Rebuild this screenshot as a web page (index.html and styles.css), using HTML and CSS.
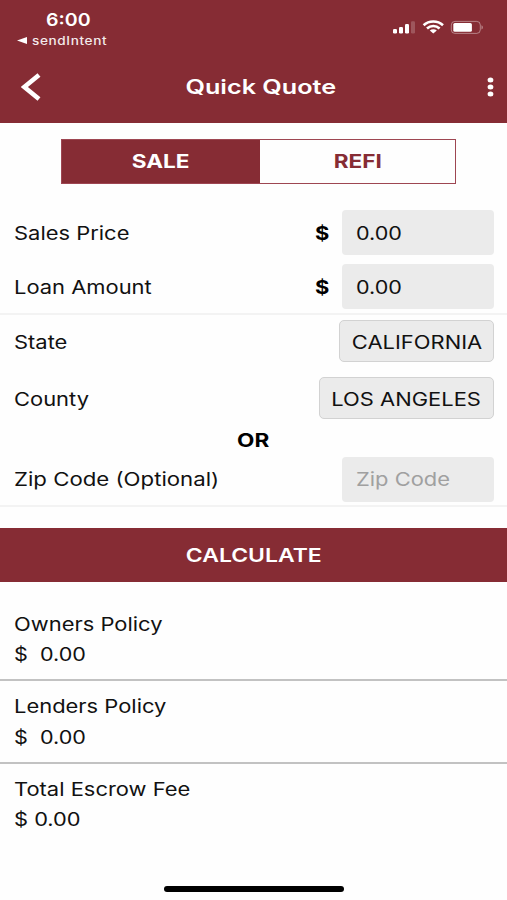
FILE: index.html
```html
<!DOCTYPE html>
<html lang="en">
<head>
    <meta charset="UTF-8">
    <meta name="viewport" content="width=device-width, initial-scale=1.0">
    <title>Quick Quote</title>
    <link rel="stylesheet" href="styles.css">
</head>
<body>
    <div class="screen">
        <header class="header">
            <div class="status-bar">
                <div class="status-left">
                    <span class="time wide">6:00</span>
                    <div class="back-app">
                        <svg class="back-arrow" width="10" height="7" viewBox="0 0 9 7" preserveAspectRatio="none"><path d="M0 3.5L9 0v7z" fill="#fff"/></svg>
                        <span class="app-name wide">sendIntent</span>
                    </div>
                </div>
                <svg class="status-icons" width="92" height="16" viewBox="0 0 92 16">
                    <g fill="#fff">
                        <rect x="0" y="9" width="4" height="4.5" rx="1.2"/>
                        <rect x="6" y="7" width="4" height="6.5" rx="1.2"/>
                        <rect x="12" y="4" width="4" height="9.5" rx="1.2"/>
                        <rect x="18" y="1.3" width="4" height="12.2" rx="1.2" opacity="0.2"/>
                        <rect x="60.3" y="3" width="18.6" height="8.8" rx="1.6"/>
                        <path d="M88.5 5.2c1.8.7 1.8 3.6 0 4.3z" opacity="0.45"/>
                    </g>
                    <g fill="none" stroke="#fff" stroke-width="2.6">
                        <path d="M30.6 5.2C36 .2 44.6 .2 50 5.2"/>
                        <path d="M34 8.5c3.6-3.4 9-3.4 12.6 0"/>
                    </g>
                    <path d="M36.8 10.6c2-1.7 5-1.7 7 0L40.3 13.6z" fill="#fff"/>
                    <rect x="58.3" y="1.4" width="29" height="12" rx="3.6" fill="none" stroke="#fff" opacity="0.4"/>
                </svg>
            </div>
            <div class="nav-bar">
                <svg class="back" width="20" height="28" viewBox="0 0 20 28"><path d="M18 2L3.3 14 18 26" fill="none" stroke="#fff" stroke-width="4.6"/></svg>
                <h1 class="title wide">Quick Quote</h1>
                <svg class="more" width="7" height="20" viewBox="0 0 7 20" fill="#fff">
                    <ellipse cx="3.5" cy="3" rx="2.9" ry="2.5"/>
                    <ellipse cx="3.5" cy="10" rx="2.9" ry="2.5"/>
                    <ellipse cx="3.5" cy="17" rx="2.9" ry="2.5"/>
                </svg>
            </div>
        </header>

        <div class="segment">
            <div class="tab active"><span class="wide">SALE</span></div>
            <div class="tab"><span class="wide">REFI</span></div>
        </div>

        <div class="prices">
            <div class="row">
                <span class="label wide">Sales Price</span>
                <span class="dollar wide">$</span>
                <div class="field"><span class="wide amount">0.00</span></div>
            </div>
            <div class="row">
                <span class="label wide">Loan Amount</span>
                <span class="dollar wide">$</span>
                <div class="field"><span class="wide amount">0.00</span></div>
            </div>
        </div>

        <div class="location">
            <div class="row state-row">
                <span class="label wide">State</span>
                <div class="picker state"><span class="wide">CALIFORNIA</span></div>
            </div>
            <div class="row county-row">
                <span class="label wide">County</span>
                <div class="picker county"><span class="wide">LOS ANGELES</span></div>
            </div>
            <div class="or"><span class="wide">OR</span></div>
            <div class="row zip-row">
                <span class="label wide">Zip Code (Optional)</span>
                <div class="field"><span class="wide placeholder">Zip Code</span></div>
            </div>
        </div>

        <div class="calculate"><span class="wide">CALCULATE</span></div>

        <div class="results">
            <div class="result">
                <span class="wide">Owners Policy</span>
                <span class="wide amount">$&nbsp; 0.00</span>
            </div>
            <div class="result">
                <span class="wide">Lenders Policy</span>
                <span class="wide amount">$&nbsp; 0.00</span>
            </div>
            <div class="result">
                <span class="wide">Total Escrow Fee</span>
                <span class="wide amount total">$ 0.00</span>
            </div>
        </div>

        <div class="home-indicator"></div>
    </div>
</body>
</html>
```
FILE: styles.css
```css
body {
    margin: 0;
    font-family: Inter, "Liberation Sans", sans-serif;
    font-size: 18.5px;
    line-height: 24px;
    color: #111;
    background-color: #fefefe;
}

.screen {
    display: flex;
    flex-direction: column;
    width: 507px;
    height: 900px;
    overflow: hidden;
}

/* extended letterforms */
.wide {
    display: inline-block;
    white-space: nowrap;
    transform: scaleX(1.185);
    transform-origin: left center;
}

.header {
    height: 123px;
    background-color: #862c34;
    color: #fff;
}

.status-bar {
    display: flex;
    justify-content: space-between;
    height: 51px;
    padding: 8px 22px 0 17px;
    box-sizing: border-box;
}

.status-left {
    display: flex;
    flex-direction: column;
}

.time {
    margin-left: 29px;
    font-size: 17px;
    font-weight: 600;
    line-height: 24px;
    transform: scaleX(1.15);
}

.back-app {
    display: flex;
    align-items: center;
    gap: 5px;
    height: 17px;
}

.app-name {
    padding-top: 1px;
    font-size: 11.5px;
    font-weight: 500;
    letter-spacing: 0.5px;
    line-height: 17px;
    opacity: 0.9;
}

.status-icons {
    margin-top: 12px;
}

.nav-bar {
    display: flex;
    align-items: center;
    justify-content: space-between;
    height: 72px;
    padding: 0 13px 0 21px;
}

.title {
    margin: 0 6px 0 0;
    font-size: 20px;
    font-weight: 600;
    transform: scaleX(1.26);
    transform-origin: center;
}

.segment {
    display: flex;
    width: 395px;
    height: 45px;
    margin: 16px 0 0 61px;
    border: 1px solid #9e4652;
    box-sizing: border-box;
}

.tab {
    display: flex;
    flex: 1;
    align-items: center;
    justify-content: center;
    padding-bottom: 1px;
    color: #862c34;
    font-weight: 700;
}

.tab .wide,
.picker .wide,
.or .wide,
.calculate .wide {
    transform-origin: center;
}

.tab .wide {
    transform: scaleX(1.22);
}

.tab.active {
    flex: 0 0 198px;
    background-color: #862c34;
    color: #fff;
}

.prices {
    height: 131px;
    padding-top: 26px;
    box-sizing: border-box;
    border-bottom: 2px solid #f3f3f3;
}

.row {
    display: flex;
    align-items: center;
    height: 45px;
    padding: 0 13px 0 14px;
}

.prices .row + .row {
    margin-top: 9px;
}

.label {
    margin-right: auto;
}

.dollar {
    width: 12px;
    margin-right: 15px;
    font-weight: 700;
    color: #000;
}

.field {
    display: flex;
    align-items: center;
    width: 152px;
    height: 45px;
    padding-left: 14px;
    border-radius: 4px;
    background-color: #ebebeb;
    box-sizing: border-box;
}

.amount {
    transform: scaleX(1.165);
}

.placeholder {
    color: #a0a0a0;
}

.location {
    height: 192px;
    padding-top: 5px;
    box-sizing: border-box;
    border-bottom: 2px solid #f3f3f3;
}

.state-row,
.county-row {
    height: 42px;
}

.county-row {
    margin-top: 15px;
}

.state-row .label,
.county-row .label {
    padding-top: 2px;
}

.picker {
    display: flex;
    align-items: center;
    justify-content: center;
    height: 42px;
    padding-top: 2px;
    border: 1px solid #d2d2d2;
    border-radius: 5px;
    background-color: #ebebeb;
    box-sizing: border-box;
}

.state {
    width: 155px;
}

.county {
    width: 175px;
}

.or {
    height: 24px;
    margin: 9px 0 5px;
    color: #000;
    font-weight: 700;
    text-align: center;
}

.or .wide {
    transform: scaleX(1.22);
}

.zip-row .wide {
    padding-bottom: 2px;
}

.zip-row .label {
    transform: scaleX(1.2);
}

.calculate {
    display: flex;
    align-items: center;
    justify-content: center;
    height: 54px;
    margin-top: 21px;
    background-color: #862c34;
    color: #fff;
    font-weight: 600;
}

.calculate .wide {
    transform: scaleX(1.24);
}

.results {
    padding-top: 15px;
}

.result {
    display: flex;
    flex-direction: column;
    gap: 7px;
    height: 83px;
    padding: 13px 14px 0;
    box-sizing: border-box;
    border-bottom: 2px solid #c2c2c2;
}

.result:first-child {
    height: 84px;
    padding-top: 15px;
    gap: 6px;
}

.result:last-child {
    border-bottom: none;
    gap: 6px;
}

.total {
    transform: scaleX(1.18);
}

.home-indicator {
    width: 180px;
    height: 6px;
    margin: auto auto 8px 164px;
    border-radius: 3px;
    background-color: #000;
}
```
